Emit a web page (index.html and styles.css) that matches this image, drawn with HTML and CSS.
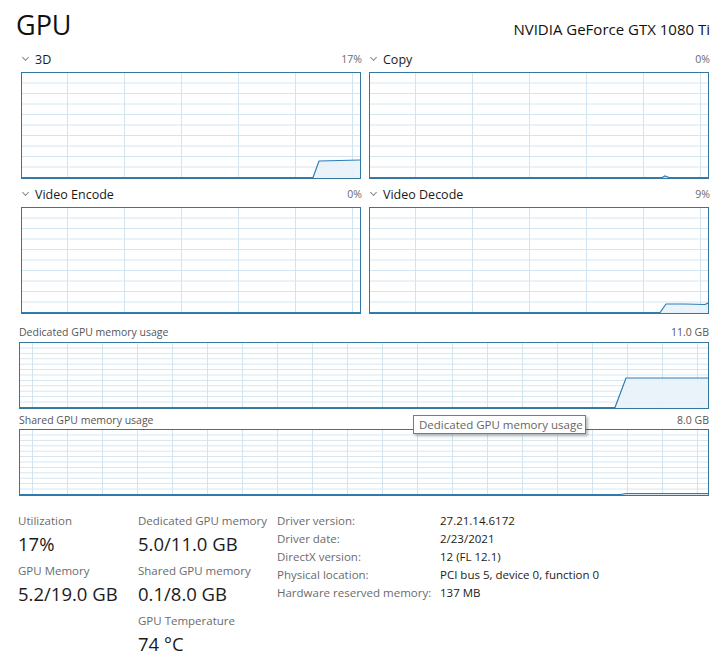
FILE: index.html
```html
<!DOCTYPE html>
<html>
<head>
<meta charset="utf-8">
<link rel="stylesheet" href="styles.css">
</head>
<body>
<div class="page">
  <header class="header">
    <h1 class="title">GPU</h1>
    <div class="device">NVIDIA GeForce GTX 1080 Ti</div>
  </header>

  <section class="engines">
    <div class="engine">
      <div class="engine-head">
        <span class="engine-name"><span class="chev"></span>3D</span>
        <span class="pct">17%</span>
      </div>
      <div class="chart chart-small">
        <svg class="data" viewBox="0 0 338 105" preserveAspectRatio="none">
          <polygon class="fill" points="0,105 291,105 297,88 338,87 338,105"/>
          <polyline class="line" points="0,104.5 291,104.5 297,88 338,87"/>
        </svg>
      </div>
    </div>
    <div class="engine">
      <div class="engine-head">
        <span class="engine-name"><span class="chev"></span>Copy</span>
        <span class="pct">0%</span>
      </div>
      <div class="chart chart-small">
        <svg class="data" viewBox="0 0 338 105" preserveAspectRatio="none">
          <polyline class="line" points="0,104.5 292,104.5 295,103 299,104.5 338,104.5"/>
        </svg>
      </div>
    </div>
    <div class="engine">
      <div class="engine-head">
        <span class="engine-name"><span class="chev"></span>Video Encode</span>
        <span class="pct">0%</span>
      </div>
      <div class="chart chart-small">
        <svg class="data" viewBox="0 0 338 105" preserveAspectRatio="none">
          <polyline class="line" points="0,104.5 338,104.5"/>
        </svg>
      </div>
    </div>
    <div class="engine">
      <div class="engine-head">
        <span class="engine-name"><span class="chev"></span>Video Decode</span>
        <span class="pct">9%</span>
      </div>
      <div class="chart chart-small">
        <svg class="data" viewBox="0 0 338 105" preserveAspectRatio="none">
          <polygon class="fill" points="0,105 290,105 296,96 315,96 335,96.5 338,95 338,105"/>
          <polyline class="line" points="0,104.5 290,104.5 296,96 315,96 335,96.5 338,95"/>
        </svg>
      </div>
    </div>
  </section>

  <section class="memory">
    <div class="mem-head">
      <span>Dedicated GPU memory usage</span>
      <span>11.0 GB</span>
    </div>
    <div class="chart chart-wide">
      <svg class="data" viewBox="0 0 688 65" preserveAspectRatio="none">
        <polygon class="fill" points="595,65 606,35 688,35 688,65"/>
        <polyline class="line" points="0,64.5 595,64.5 606,35 688,35"/>
      </svg>
    </div>
    <div class="mem-head">
      <span>Shared GPU memory usage</span>
      <span>8.0 GB</span>
    </div>
    <div class="chart chart-wide">
      <svg class="data" viewBox="0 0 688 65" preserveAspectRatio="none">
        <polyline class="line" points="0,64.5 600,64.5 606,63.5 688,63.5"/>
      </svg>
    </div>
  </section>

  <section class="stats">
    <div class="stat-col col1">
      <div class="stat">
        <div class="stat-label">Utilization</div>
        <div class="stat-value">17%</div>
      </div>
      <div class="stat">
        <div class="stat-label">GPU Memory</div>
        <div class="stat-value">5.2/19.0 GB</div>
      </div>
    </div>
    <div class="stat-col col2">
      <div class="stat">
        <div class="stat-label">Dedicated GPU memory</div>
        <div class="stat-value">5.0/11.0 GB</div>
      </div>
      <div class="stat">
        <div class="stat-label">Shared GPU memory</div>
        <div class="stat-value">0.1/8.0 GB</div>
      </div>
      <div class="stat">
        <div class="stat-label">GPU Temperature</div>
        <div class="stat-value">74 °C</div>
      </div>
    </div>
    <div class="props">
      <div class="prop-key">Driver version:</div><div class="prop-val">27.21.14.6172</div>
      <div class="prop-key">Driver date:</div><div class="prop-val">2/23/2021</div>
      <div class="prop-key">DirectX version:</div><div class="prop-val">12 (FL 12.1)</div>
      <div class="prop-key">Physical location:</div><div class="prop-val">PCI bus 5, device 0, function 0</div>
      <div class="prop-key">Hardware reserved memory:</div><div class="prop-val">137 MB</div>
    </div>
  </section>

  <div class="tooltip">Dedicated GPU memory usage</div>
</div>
</body>
</html>
```

FILE: styles.css
```css
* { box-sizing: border-box; }
html, body {
  margin: 0;
  padding: 0;
  background: #ffffff;
}
body {
  font-family: "Open Sans", "Noto Sans", sans-serif;
  color: #1b1b1b;
}
.page {
  position: relative;
  width: 722px;
  height: 670px;
  padding: 9px 13px 0 16px;
  overflow: hidden;
}
.header {
  display: flex;
  justify-content: space-between;
  align-items: baseline;
  height: 41px;
}
.title {
  margin: 0;
  font-size: 27px;
  font-weight: 400;
  line-height: 32px;
  color: #111;
}
.device {
  font-size: 15px;
  line-height: 20px;
  color: #111;
  margin-right: -1px;
}

/* engine charts */
.engines {
  display: grid;
  grid-template-columns: 1fr 1fr;
  column-gap: 8px;
  row-gap: 6px;
  padding-left: 5px;
}
.engine-head {
  display: flex;
  justify-content: space-between;
  align-items: center;
  height: 18px;
  margin-bottom: 4px;
}
.engine-name {
  display: flex;
  align-items: center;
  font-size: 12.5px;
  color: #1a1a1a;
}
.chev {
  width: 5px;
  height: 5px;
  border-right: 1px solid #8a8a8a;
  border-bottom: 1px solid #8a8a8a;
  transform: rotate(45deg);
  margin: -3px 7px 0 2px;
}
.pct {
  font-size: 10.5px;
  color: #6a6a6a;
  margin-right: -1px;
}

.chart {
  position: relative;
  border: 1px solid #33769f;
  background-color: #fff;
}
.chart-small {
  height: 107px;
  background-image:
    linear-gradient(to right, #d2e4ef 1px, transparent 1px),
    linear-gradient(to top, #d2e4ef 1px, transparent 1px);
  background-size: 57px 100%, 100% 10%;
  background-position: 45px 0, 0 0;
}
.chart-wide {
  height: 67px;
  background-image:
    linear-gradient(to right, #d2e4ef 1px, transparent 1px),
    linear-gradient(to top, #d2e4ef 1px, transparent 1px);
  background-size: 35px 100%, 100% 8.333%;
  background-position: 12px 0, 0 0;
}
.data {
  position: absolute;
  inset: 0;
  width: 100%;
  height: 100%;
  display: block;
}
.fill {
  fill: #e9f2f9;
  fill-opacity: 0.9;
}
.line {
  fill: none;
  stroke: #2f7db3;
  stroke-width: 1.2;
  vector-effect: non-scaling-stroke;
}

/* memory charts */
.memory {
  margin-top: 11px;
  padding-left: 3px;
}
.mem-head {
  display: flex;
  justify-content: space-between;
  align-items: center;
  height: 14px;
  font-size: 10.5px;
  color: #555;
  margin-bottom: 3px;
}
.memory .chart-wide + .mem-head {
  margin-top: 4px;
  margin-bottom: 2px;
}

/* stats */
.stats {
  display: flex;
  align-items: flex-start;
  margin-top: 16px;
  padding-left: 2px;
}
.col1 { width: 120px; }
.col2 { width: 139px; }
.stat {
  margin-bottom: 4px;
}
.stat-label {
  font-size: 11.5px;
  line-height: 18px;
  color: #6b6b6b;
  white-space: nowrap;
}
.stat-value {
  font-size: 18.5px;
  line-height: 28px;
  color: #1b1b1b;
  white-space: nowrap;
}
.props {
  display: grid;
  grid-template-columns: 163px auto;
  align-content: start;
  font-size: 11.5px;
  line-height: 18px;
}
.prop-key { color: #6b6b6b; white-space: nowrap; }
.prop-val { color: #1b1b1b; white-space: nowrap; }

/* tooltip */
.tooltip {
  position: absolute;
  left: 413px;
  top: 415px;
  width: 173px;
  height: 19px;
  padding: 0 5px;
  background: #fff;
  border: 1px solid #7a7a7a;
  box-shadow: 2px 2px 3px rgba(0,0,0,0.28);
  font-size: 11.5px;
  line-height: 17px;
  color: #666;
  white-space: nowrap;
}
```
